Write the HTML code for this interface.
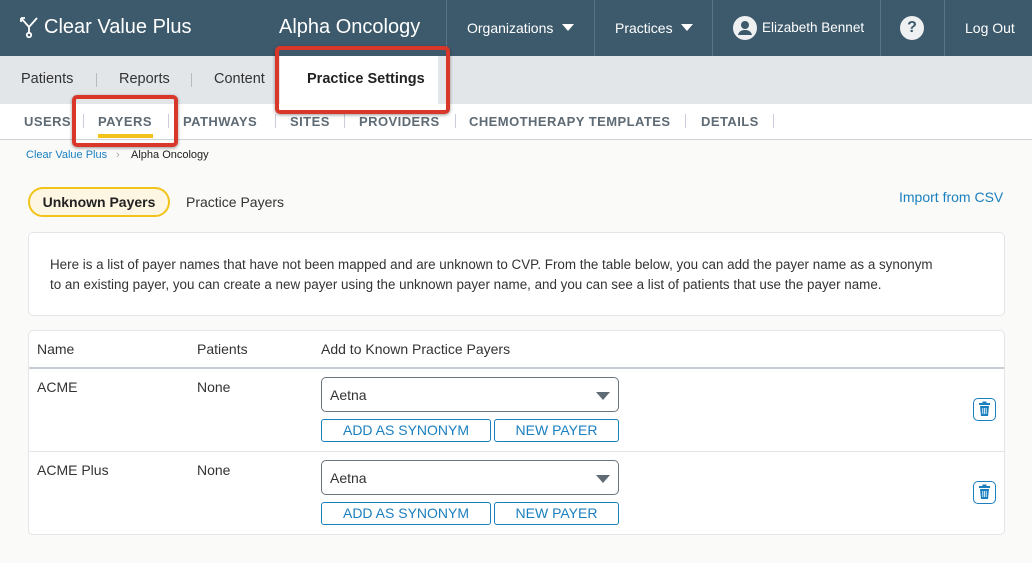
<!DOCTYPE html>
<html><head><style>
*{box-sizing:border-box;margin:0;padding:0}
body{width:1032px;height:563px;overflow:hidden;background:#fafaf9;font-family:"Liberation Sans",sans-serif;color:#333;position:relative}
.abs{position:absolute}
.hdr{left:0;top:0;width:1032px;height:56px;background:#3d5a6c;color:#fff}
.sep{position:absolute;top:0;width:1px;height:56px;background:#5a7485}
.sub{left:0;top:56px;width:1032px;height:48px;background:#e2e6e9}
.tabs{left:0;top:104px;width:1032px;height:36px;background:#fff;border-bottom:1px solid #cfd3d6}
.t{position:absolute;top:114px;font-size:13px;font-weight:bold;color:#5e6a74;letter-spacing:.45px}
.bar{position:absolute;top:114px;width:1px;height:14px;background:#ccd}
.red{position:absolute;border:4px solid #d9372a;border-radius:5px;box-shadow:0 1px 3px rgba(0,0,0,.4)}
.btn{position:absolute;height:23px;border:1px solid #1a7fbf;border-radius:3px;color:#1a7fbf;font-size:14px;text-align:center;line-height:21px;background:#fff}
.sel{position:absolute;left:321px;width:298px;height:35px;border:1px solid #6c757d;border-radius:5px;background:#fff;font-size:14px;padding:9px 8px;color:#333}
.sel:after{content:"";position:absolute;right:8px;top:14px;border-left:7px solid transparent;border-right:7px solid transparent;border-top:8px solid #5e6a74}
.trash{position:absolute;left:973px;width:23px;height:23px;border:1px solid #1a7fbf;border-radius:5px;background:#fff}
</style></head><body>
<div class="abs hdr">
<svg class="abs" style="left:19px;top:16px" width="20" height="22" viewBox="0 0 20 22" fill="none" stroke="#fff" stroke-width="1.8"><path d="M2 2l8 9l8-9M10 11v6"/><circle cx="10" cy="19" r="2.2"/><path d="M2 2v4M2 2h4"/></svg>
<div class="abs" style="left:44px;top:16px;font-size:20px">Clear Value Plus</div>
<div class="abs" style="left:279px;top:16px;font-size:20px">Alpha Oncology</div>
<div class="sep" style="left:446px"></div><div class="sep" style="left:594px"></div><div class="sep" style="left:712px"></div><div class="sep" style="left:880px"></div><div class="sep" style="left:944px"></div>
<div class="abs" style="left:467px;top:20px;font-size:14px">Organizations</div>
<div class="abs" style="left:562px;top:24px;border-left:6px solid transparent;border-right:6px solid transparent;border-top:7px solid #fff"></div>
<div class="abs" style="left:615px;top:20px;font-size:14px">Practices</div>
<div class="abs" style="left:681px;top:24px;border-left:6px solid transparent;border-right:6px solid transparent;border-top:7px solid #fff"></div>
<svg class="abs" style="left:733px;top:16px" width="24" height="24" viewBox="0 0 24 24"><circle cx="12" cy="12" r="12" fill="#eef0f2"/><circle cx="12" cy="9" r="4" fill="#3d5a6c"/><path d="M5 19c1-4 4-5 7-5s6 1 7 5z" fill="#3d5a6c"/></svg>
<div class="abs" style="left:762px;top:20px;font-size:13.5px">Elizabeth Bennet</div>
<div class="abs" style="left:900px;top:16px;width:24px;height:24px;border-radius:50%;background:#eef0f2;color:#3d5a6c;font-weight:bold;font-size:16px;text-align:center;line-height:24px">?</div>
<div class="abs" style="left:965px;top:20px;font-size:14px">Log Out</div>
</div>
<div class="abs sub">
<div class="abs" style="left:21px;top:15px;font-size:14.5px">Patients</div>
<div class="abs" style="left:96px;top:17px;width:1px;height:14px;background:#bbb"></div>
<div class="abs" style="left:119px;top:15px;font-size:14.5px">Reports</div>
<div class="abs" style="left:191px;top:17px;width:1px;height:14px;background:#bbb"></div>
<div class="abs" style="left:214px;top:15px;font-size:14.5px">Content</div>
<div class="abs" style="left:280px;top:0;width:158px;height:48px;background:#fff"></div>
<div class="abs" style="left:307px;top:15px;font-size:14.5px;font-weight:bold;color:#222">Practice Settings</div>
</div>
<div class="abs tabs"></div>
<div class="t" style="left:24px">USERS</div><div class="bar" style="left:83px"></div>
<div class="t" style="left:98px">PAYERS</div><div class="bar" style="left:168px"></div>
<div class="abs" style="left:98px;top:134px;width:55px;height:4px;background:#f2c31a"></div>
<div class="t" style="left:183px">PATHWAYS</div><div class="bar" style="left:275px"></div>
<div class="t" style="left:290px">SITES</div><div class="bar" style="left:344px"></div>
<div class="t" style="left:359px">PROVIDERS</div><div class="bar" style="left:455px"></div>
<div class="t" style="left:469px">CHEMOTHERAPY TEMPLATES</div><div class="bar" style="left:685px"></div>
<div class="t" style="left:701px">DETAILS</div><div class="bar" style="left:773px"></div>
<div class="red" style="left:275px;top:46px;width:175px;height:68px"></div>
<div class="red" style="left:72px;top:95px;width:106px;height:52px"></div>
<div class="abs" style="left:26px;top:149px;font-size:11px;color:#1a7fbf">Clear Value Plus</div>
<div class="abs" style="left:116px;top:149px;font-size:11px;color:#aaa">›</div>
<div class="abs" style="left:131px;top:149px;font-size:11px;color:#222">Alpha Oncology</div>
<div class="abs" style="left:28px;top:187px;width:142px;height:30px;border:2px solid #f2c31a;border-radius:15px;background:#fdf6e3;font-size:14px;font-weight:bold;text-align:center;line-height:26px;color:#222">Unknown Payers</div>
<div class="abs" style="left:186px;top:194px;font-size:14px;color:#333">Practice Payers</div>
<div class="abs" style="left:899px;top:189px;font-size:14px;color:#1a7fbf">Import from CSV</div>
<div class="abs" style="left:28px;top:232px;width:977px;height:84px;background:#fff;border:1px solid #e3e5e7;border-radius:5px;padding:22px 60px 0 21px;font-size:13.4px;line-height:20px;color:#333">Here is a list of payer names that have not been mapped and are unknown to CVP. From the table below, you can add the payer name as a synonym to an existing payer, you can create a new payer using the unknown payer name, and you can see a list of patients that use the payer name.</div>
<div class="abs" style="left:28px;top:330px;width:977px;height:205px;background:#fff;border:1px solid #e3e5e7;border-radius:5px"></div>
<div class="abs" style="left:29px;top:367px;width:975px;height:2px;background:#c5ccd3"></div>
<div class="abs" style="left:29px;top:451px;width:975px;height:1px;background:#e3e5e7"></div>
<div class="abs" style="left:37px;top:341px;font-size:14px">Name</div>
<div class="abs" style="left:197px;top:341px;font-size:14px">Patients</div>
<div class="abs" style="left:321px;top:341px;font-size:14px">Add to Known Practice Payers</div>
<div class="abs" style="left:37px;top:379px;font-size:14px">ACME</div>
<div class="abs" style="left:197px;top:379px;font-size:14px">None</div>
<div class="sel" style="top:377px">Aetna</div>
<div class="btn" style="left:321px;top:419px;width:170px">ADD AS SYNONYM</div>
<div class="btn" style="left:494px;top:419px;width:125px">NEW PAYER</div>
<div class="trash" style="top:398px"><svg width="21" height="21" viewBox="0 0 21 21"><rect x="5" y="4" width="11" height="2" fill="#1a7fbf"/><rect x="8.5" y="2.5" width="4" height="2" fill="#1a7fbf"/><path d="M6 7h9l-1 10H7z" fill="#1a7fbf"/><path d="M8.8 9v6M10.5 9v6M12.2 9v6" stroke="#fff" stroke-width=".8"/></svg></div>
<div class="abs" style="left:37px;top:462px;font-size:14px">ACME Plus</div>
<div class="abs" style="left:197px;top:462px;font-size:14px">None</div>
<div class="sel" style="top:460px">Aetna</div>
<div class="btn" style="left:321px;top:502px;width:170px">ADD AS SYNONYM</div>
<div class="btn" style="left:494px;top:502px;width:125px">NEW PAYER</div>
<div class="trash" style="top:481px"><svg width="21" height="21" viewBox="0 0 21 21"><rect x="5" y="4" width="11" height="2" fill="#1a7fbf"/><rect x="8.5" y="2.5" width="4" height="2" fill="#1a7fbf"/><path d="M6 7h9l-1 10H7z" fill="#1a7fbf"/><path d="M8.8 9v6M10.5 9v6M12.2 9v6" stroke="#fff" stroke-width=".8"/></svg></div>
</body></html>
